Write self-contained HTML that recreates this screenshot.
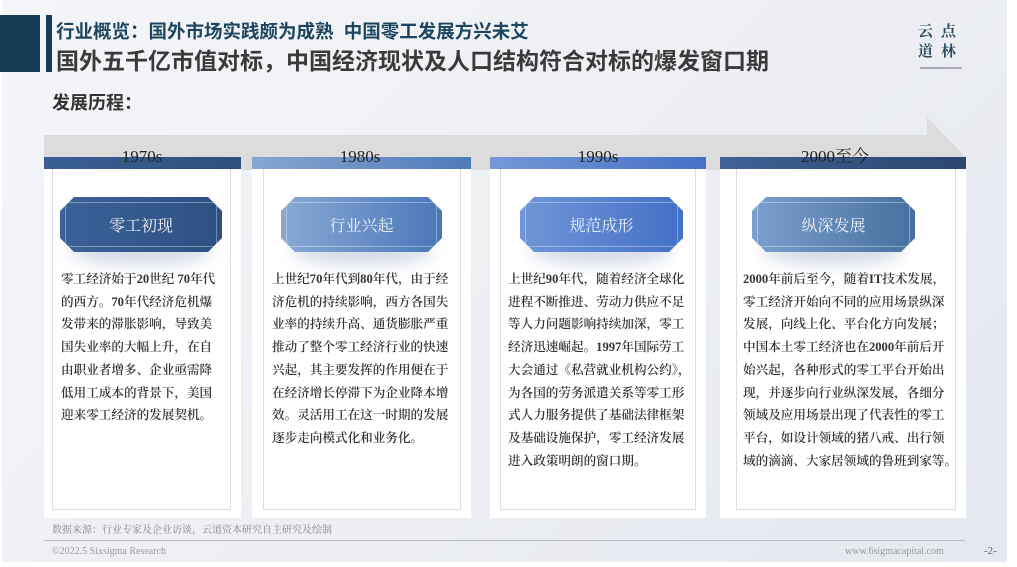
<!DOCTYPE html>
<html><head><meta charset="utf-8"><style>
*{margin:0;padding:0;box-sizing:border-box}
body{width:1017px;height:567px;background:#fff;position:relative;overflow:hidden;font-family:"Liberation Serif","Noto Serif CJK SC",serif}
.slide{position:absolute;left:2px;top:0;width:1005px;height:562px;background:linear-gradient(135deg,#f4f5f8 0%,#eceef3 60%,#e4e8f0 100%)}
.abs{position:absolute}
.sans{font-family:"Liberation Sans","Noto Sans CJK SC",sans-serif}
.card{position:absolute;top:168px;height:350px;background:#fff}
.inner{position:absolute;border:1px solid #d8dde8;border-top:none}
.bar{position:absolute;top:157px;height:12px}
.yr{position:absolute;top:146px;height:22px;line-height:22px;font-size:17px;color:#222;text-align:center;width:200px}
.btn{position:absolute;top:197px;height:55px;clip-path:polygon(14px 0,calc(100% - 14px) 0,100% 14px,100% calc(100% - 14px),calc(100% - 14px) 100%,14px 100%,0 calc(100% - 14px),0 14px)}
.btn .in{position:absolute;left:5px;top:5px;right:5px;bottom:5px;border:1px solid rgba(255,255,255,.35)}
.btn span{position:absolute;left:0;right:0;top:16px;text-align:center;color:#eef2f8;font-size:16px}
.sh{position:absolute;top:235px;height:30px;border-radius:50%;background:rgba(60,90,150,.22);filter:blur(8px)}
.txt{position:absolute;top:268px;font-size:12.6px;line-height:22.7px;color:#333;white-space:nowrap;font-weight:600}
</style></head><body>
<div class="slide"></div>
<div class="abs" style="left:0;top:15px;width:40px;height:57px;background:#173b55"></div>
<div class="abs" style="left:46px;top:15px;width:6px;height:57px;background:#173b55"></div>
<div class="abs sans" style="left:56px;top:18px;font-size:18.5px;font-weight:bold;color:#1d4560;white-space:nowrap">行业概览：国外市场实践颇为成熟&nbsp; 中国零工发展方兴未艾</div>
<div class="abs sans" style="left:56px;top:42px;font-size:23px;font-weight:bold;color:#3a3a3a;white-space:nowrap">国外五千亿市值对标，中国经济现状及人口结构符合对标的爆发窗口期</div>
<div class="abs" style="left:918px;top:22px;font-size:15px;line-height:20px;color:#2a4a60;letter-spacing:8px;font-weight:bold">云点<br>道林</div>
<div class="abs" style="left:920px;top:67px;width:42px;height:2px;background:#aab"></div>
<div class="abs sans" style="left:52px;top:89px;font-size:18px;font-weight:bold;color:#333">发展历程：</div>
<svg class="abs" style="left:0;top:0" width="1017" height="200"><polygon points="44,135 927,135 927,117 964,155 964,170 44,170" fill="#dcdcdc"/></svg>
<div class="card" style="left:44px;width:197px"></div>
<div class="card" style="left:252px;width:219px"></div>
<div class="card" style="left:490px;width:216px"></div>
<div class="card" style="left:720px;width:246px"></div>
<div class="inner" style="left:52px;top:168px;width:179px;height:342px"></div>
<div class="inner" style="left:263px;top:168px;width:198px;height:342px"></div>
<div class="inner" style="left:500px;top:168px;width:196px;height:342px"></div>
<div class="inner" style="left:736px;top:168px;width:220px;height:342px"></div>
<div class="bar" style="left:44px;width:197px;background:linear-gradient(90deg,#3a5f93,#2e4f7e)"></div>
<div class="bar" style="left:252px;width:219px;background:linear-gradient(90deg,#86a6d2,#4f7ab8)"></div>
<div class="bar" style="left:490px;width:216px;background:linear-gradient(90deg,#7598d8,#4470c6)"></div>
<div class="bar" style="left:720px;width:246px;background:linear-gradient(90deg,#3f6194,#2b4670)"></div>
<div class="yr" style="left:42px">1970s</div>
<div class="yr" style="left:260px">1980s</div>
<div class="yr" style="left:498px">1990s</div>
<div class="yr" style="left:735px">2000至今</div>
<div class="sh" style="left:70px;width:142px"></div>
<div class="sh" style="left:291px;width:142px"></div>
<div class="sh" style="left:530px;width:142px"></div>
<div class="sh" style="left:762px;width:142px"></div>
<div class="btn" style="left:60px;width:162px;background:linear-gradient(90deg,#3d6298,#2c5082)"><div class="in"></div><span>零工初现</span></div>
<div class="btn" style="left:281px;width:161px;background:linear-gradient(90deg,#8aa9d4,#4a77b8)"><div class="in"></div><span>行业兴起</span></div>
<div class="btn" style="left:520px;width:163px;background:linear-gradient(90deg,#7196d8,#4270c7)"><div class="in"></div><span>规范成形</span></div>
<div class="btn" style="left:752px;width:163px;background:linear-gradient(90deg,#7d9fcd,#46709f)"><div class="in"></div><span>纵深发展</span></div>
<div class="txt" style="left:61px">零工经济始于20世纪 70年代<br>的西方。70年代经济危机爆<br>发带来的滞胀影响，导致美<br>国失业率的大幅上升，在自<br>由职业者增多、企业亟需降<br>低用工成本的背景下，美国<br>迎来零工经济的发展契机。</div>
<div class="txt" style="left:272px">上世纪70年代到80年代，由于经<br>济危机的持续影响，西方各国失<br>业率的持续升高、通货膨胀严重<br>推动了整个零工经济行业的快速<br>兴起，其主要发挥的作用便在于<br>在经济增长停滞下为企业降本增<br>效。灵活用工在这一时期的发展<br>逐步走向模式化和业务化。</div>
<div class="txt" style="left:508px">上世纪90年代，随着经济全球化<br>进程不断推进、劳动力供应不足<br>等人力问题影响持续加深，零工<br>经济迅速崛起。1997年国际劳工<br>大会通过《私营就业机构公约》，<br>为各国的劳务派遣关系等零工形<br>式人力服务提供了基础法律框架<br>及基础设施保护，零工经济发展<br>进入政策明朗的窗口期。</div>
<div class="txt" style="left:743px">2000年前后至今，随着IT技术发展，<br>零工经济开始向不同的应用场景纵深<br>发展，向线上化、平台化方向发展；<br>中国本土零工经济也在2000年前后开<br>始兴起，各种形式的零工平台开始出<br>现，并逐步向行业纵深发展，各细分<br>领域及应用场景出现了代表性的零工<br>平台，如设计领域的猪八戒、出行领<br>域的滴滴、大家居领域的鲁班到家等。</div>
<div class="abs" style="left:52px;top:521px;font-size:10px;color:#888">数据来源：行业专家及企业访谈，云道资本研究自主研究及绘制</div>
<div class="abs" style="left:44px;top:540px;width:921px;height:1px;background:#b8bcc4"></div>
<div class="abs" style="left:52px;top:546px;font-size:10px;color:#999">©2022.5 Sixsigma Research</div>
<div class="abs" style="left:845px;top:546px;font-size:10px;color:#999">www.6sigmacapital.com</div>
<div class="abs" style="left:984px;top:545px;font-size:11px;color:#666">-2-</div>
</body></html>
